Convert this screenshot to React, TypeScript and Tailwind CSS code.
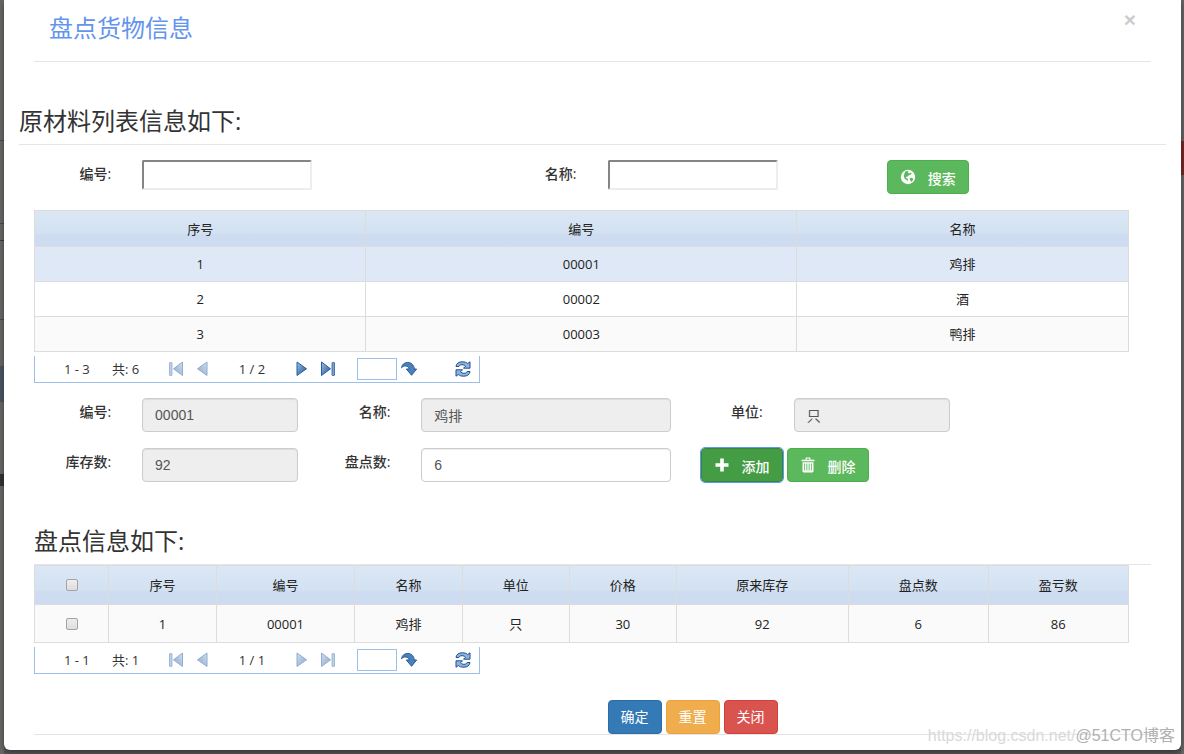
import { useState } from 'react';
import type { ReactNode } from 'react';

const MATERIALS = [
  { id: 1, code: '00001', name: '鸡排' },
  { id: 2, code: '00002', name: '酒' },
  { id: 3, code: '00003', name: '鸭排' }
];

const CHECK_HEADERS = ['序号', '编号', '名称', '单位', '价格', '原来库存', '盘点数', '盈亏数'];
const CHECK_ROWS = [['1', '00001', '鸡排', '只', '30', '92', '6', '86']];

const HEAD_BG = 'bg-linear-to-b from-[#dbe7f5] from-0% via-[#d3e1f1] via-62% to-[#cddcf0] to-66%';
const CELL = 'border border-[#dcdcdc] p-0 text-center font-normal';
const BUTTON = 'inline-flex h-[34px] items-center justify-center rounded border text-sm text-white';
const GREEN = 'w-[82px] gap-3 border-[#4cae4c] bg-[#5cb85c] pt-1 font-medium';

function GlobeIcon() {
  return (
    <svg viewBox="0 0 16 16" className="mb-1 size-4" aria-hidden="true">
      <circle cx="8" cy="8" r="7.2" fill="#fff" />
      <path
        d="M5.2 2.6 7.4 2l1.2.8-.6 1.1 1.3.5 1.6-.9.8 1.2-1.4 1.1-1.5.4-1 1.3-1.5.3-.4 1.2 1.3.3.8 1.3-.4 1.7-1-1.2-1.9-1.4-1-2.5.5-2z"
        fill="#5cb85c"
      />
      <path d="m9.6 9.2 1.9-.5 1.8.9-.6 1.7-1.6 1.7-.8-1.4z" fill="#5cb85c" />
    </svg>
  );
}

function PlusIcon() {
  return (
    <svg viewBox="0 0 16 16" className="mb-1 size-4" aria-hidden="true">
      <path d="M6.2 1.5h3.6v4.7h4.7v3.6H9.8v4.7H6.2V9.8H1.5V6.2h4.7z" fill="#fff" />
    </svg>
  );
}

function TrashIcon() {
  return (
    <svg viewBox="0 0 16 16" className="mb-1 size-4" aria-hidden="true">
      <path
        d="M1.5 4.3V2.8h4V1.6c0-.6.4-1 1-1h3c.6 0 1 .4 1 1v1.2h4v1.5zM6.6 2.8h2.8V1.6H6.6z"
        fill="#fff"
        fillRule="evenodd"
      />
      <path
        d="M2.5 5.2h11v9c0 .7-.5 1.2-1.2 1.2H3.7c-.7 0-1.2-.5-1.2-1.2zM4.2 6.6v7h.9v-7zm2.2 0v7h.9v-7zm2.3 0v7h.9v-7zm2.2 0v7h.9v-7z"
        fill="#fff"
        fillRule="evenodd"
      />
    </svg>
  );
}

function StepIcon({ back, bar }: { back?: boolean; bar?: boolean }) {
  return (
    <svg viewBox="0 0 16 16" className={back ? 'size-4 -scale-x-100' : 'size-4'} aria-hidden="true">
      <defs>
        <linearGradient id="step" x1="0" y1="0" x2="1" y2="1">
          <stop offset="0" stopColor="#9fc2e6" />
          <stop offset="1" stopColor="#1d4f91" />
        </linearGradient>
      </defs>
      <path
        d={bar ? 'M1.5 1v13.500L10.500 7.800z' : 'M3 1v13.500L12.500 7.800z'}
        fill="url(#step)"
        stroke="#2a5d9f"
        strokeLinejoin="round"
      />
      {bar && <rect x="12" y="1.5" width="2.5" height="13" rx="0.5" fill="#7aa3d3" stroke="#2a5d9f" strokeWidth="0.8" />}
    </svg>
  );
}

function GoIcon() {
  return (
    <svg viewBox="0 0 16 16" className="size-4" aria-hidden="true">
      <path
        d="M.5 6.8C1 3.400 3.600 1.300 6.800 1.400c3.700.1 6.300 2.700 6.500 6.600h2.300L10.600 14.300 5.300 8h2.900C8 6.200 6.500 5 4.600 5 3 5 1.500 5.600.5 6.800z"
        fill="#4a80bb"
        stroke="#1f5192"
        strokeWidth="0.9"
        strokeLinejoin="round"
      />
    </svg>
  );
}

function RefreshIcon() {
  return (
    <svg viewBox="0 0 16 16" className="size-4" aria-hidden="true">
      <g fill="#8fb4dc" stroke="#1f5192" strokeLinejoin="round">
        <path d="M1 5.500C1.200 2.400 3.800.8 7.200.8c2.400 0 4.200.5 5.500 1.700L15 .8v6.400H8.500l2-2C9.600 4.200 8.400 3.700 7 3.700c-1.700 0-2.700.6-3.100 1.800z" />
        <path d="M15 10.500c-.2 3.100-2.800 4.700-6.200 4.700-2.400 0-4.200-.5-5.500-1.700L1 15.200V8.800h6.500l-2 2c.9 1 2.100 1.500 3.500 1.500 1.700 0 2.700-.6 3.100-1.800z" />
      </g>
    </svg>
  );
}

type PagerProps = { range: string; total: number; page: string; hasNext: boolean };

function Pager({ range, total, page, hasNext }: PagerProps) {
  return (
    <div className="mt-1 flex h-[27px] w-fit items-center border-x border-b border-[#9cc0ea] pr-2 pl-[29px] text-[13px] leading-5">
      <span className="w-12">{range}</span>
      <span className="w-14">共: {total}</span>
      <button type="button" aria-label="首页" disabled className="opacity-50">
        <StepIcon back bar />
      </button>
      <button type="button" aria-label="上一页" disabled className="ml-2.5 opacity-50">
        <StepIcon back />
      </button>
      <span className="w-[84px] text-center">{page}</span>
      <button type="button" aria-label="下一页" disabled={!hasNext} className="disabled:opacity-50">
        <StepIcon />
      </button>
      <button type="button" aria-label="末页" disabled={!hasNext} className="ml-2.5 disabled:opacity-50">
        <StepIcon bar />
      </button>
      <input aria-label="页码" className="ml-[21px] h-[22px] w-10 border border-[#9cc0ea] px-1 outline-none" />
      <button type="button" aria-label="跳转" className="ml-1">
        <GoIcon />
      </button>
      <button type="button" aria-label="刷新" className="ml-[38px]">
        <RefreshIcon />
      </button>
    </div>
  );
}

function Label({ htmlFor, children }: { htmlFor: string; children: ReactNode }) {
  return (
    <label htmlFor={htmlFor} className="pt-1 pr-4 text-right text-sm leading-5 font-medium whitespace-nowrap">
      {children}
    </label>
  );
}

function Field({ id, value, onChange }: { id: string; value: string; onChange?: (value: string) => void }) {
  return (
    <input
      id={id}
      value={value}
      readOnly={!onChange}
      onChange={(event) => onChange?.(event.target.value)}
      className="h-[34px] w-full rounded border border-[#ccc] px-3 font-['Liberation_Sans','Noto_Sans_CJK_SC',sans-serif] text-sm text-[#555] shadow-[inset_0_1px_1px_rgba(0,0,0,0.075)] outline-none read-only:bg-[#eee]"
    />
  );
}

function SearchBox({ id }: { id: string }) {
  return (
    <input
      id={id}
      className="h-[30px] w-[170px] rounded-xs border-2 border-t-[#858585] border-r-[#ededed] border-b-[#ededed] border-l-[#858585] px-1 text-sm outline-none"
    />
  );
}

function CheckBox({ label }: { label: string }) {
  return (
    <input
      type="checkbox"
      aria-label={label}
      className="mx-auto block size-3 appearance-none rounded-xs border border-[#a3a3a3] bg-linear-to-b from-[#eee] to-[#ddd] checked:bg-[#337ab7] checked:bg-none"
    />
  );
}

function FormRow({ children }: { children: ReactNode }) {
  return <div className="mx-[30px] grid grid-cols-12 items-start">{children}</div>;
}

export default function App() {
  const [counted, setCounted] = useState('6');
  const [selected, setSelected] = useState(1);
  const current = MATERIALS.find((item) => item.id === selected) ?? MATERIALS[0];

  return (
    <div className="flex min-h-screen items-stretch bg-[#555] font-['Open_Sans','Noto_Sans_CJK_SC',sans-serif] text-[#333]">
      {/* dimmed page behind the dialog */}
      <div className="w-1 shrink-0 bg-[#6a6865]">
        <div className="mt-[140px] h-px bg-[#4a4a4a]" />
        <div className="mt-[82px] h-px bg-[#4a4a4a]" />
        <div className="mt-4 h-px bg-[#3c3c3c]" />
        <div className="mt-[78px] h-px bg-[#4a4a4a]" />
        <div className="mt-[46px] h-9 bg-[#4b5563]" />
        <div className="mt-[72px] h-3 bg-[#333]" />
      </div>

      <div
        role="dialog"
        aria-labelledby="dialog-title"
        className="relative mb-1 min-w-0 flex-1 self-start rounded-b-md bg-white pb-[15px] shadow-[0_2px_6px_rgba(0,0,0,0.4)]"
      >
        <header className="mx-[30px] flex h-[62px] items-start justify-between border-b border-[#e5e5e5] px-[15px]">
          <h1 id="dialog-title" className="pt-3 text-2xl leading-8 font-normal text-[#6495ed]">
            盘点货物信息
          </h1>
          <button
            type="button"
            aria-label="关闭窗口"
            className="mt-2 font-['Liberation_Sans',sans-serif] text-[21px] leading-6 font-bold text-[#ccc]"
          >
            ×
          </button>
        </header>

        <h2 className="mx-[15px] mt-9 border-b border-[#e5e5e5] text-2xl leading-[46px] font-normal">
          原材料列表信息如下:
        </h2>

        <form className="pt-[15px] pb-4" onSubmit={(event) => event.preventDefault()}>
          <FormRow>
            <Label htmlFor="search-code">编号:</Label>
            <div className="col-span-4 px-[15px]">
              <SearchBox id="search-code" />
            </div>
            <Label htmlFor="search-name">名称:</Label>
            <div className="col-span-3 px-[15px]">
              <SearchBox id="search-name" />
            </div>
            <div className="col-span-3 px-[15px]">
              <button type="submit" className={`${BUTTON} ${GREEN}`}>
                <GlobeIcon />
                搜索
              </button>
            </div>
          </FormRow>
        </form>

        <div className="mx-[30px]">
          <table className="w-[98%] table-fixed border-collapse text-[13px] leading-5 text-[#222]">
            <colgroup>
              <col className="w-[30.3%]" />
              <col className="w-[39.4%]" />
              <col className="w-[30.3%]" />
            </colgroup>
            <thead className={HEAD_BG}>
              <tr className="h-9">
                <th className={CELL}>序号</th>
                <th className={CELL}>编号</th>
                <th className={CELL}>名称</th>
              </tr>
            </thead>
            <tbody>
              {MATERIALS.map((item) => (
                <tr
                  key={item.id}
                  onClick={() => setSelected(item.id)}
                  className={item.id === selected ? 'h-[35px] bg-[#dfe8f6]' : 'h-[35px] odd:bg-[#fafafa]'}
                >
                  <td className={CELL}>{item.id}</td>
                  <td className={CELL}>{item.code}</td>
                  <td className={CELL}>{item.name}</td>
                </tr>
              ))}
            </tbody>
          </table>
          <Pager range="1 - 3" total={6} page="1 / 2" hasNext />
        </div>

        <form className="mt-[15px] space-y-4" onSubmit={(event) => event.preventDefault()}>
          <FormRow>
            <Label htmlFor="code">编号:</Label>
            <div className="col-span-2 px-[15px]">
              <Field id="code" value={current.code} />
            </div>
            <Label htmlFor="name">名称:</Label>
            <div className="col-span-3 px-[15px]">
              <Field id="name" value={current.name} />
            </div>
            <Label htmlFor="unit">单位:</Label>
            <div className="col-span-2 px-[15px]">
              <Field id="unit" value="只" />
            </div>
          </FormRow>
          <FormRow>
            <Label htmlFor="stock">库存数:</Label>
            <div className="col-span-2 px-[15px]">
              <Field id="stock" value="92" />
            </div>
            <Label htmlFor="counted">盘点数:</Label>
            <div className="col-span-3 px-[15px]">
              <Field id="counted" value={counted} onChange={setCounted} />
            </div>
            <div className="col-span-4 flex gap-1 px-[15px]">
              <button
                type="button"
                className={`${BUTTON} w-[82px] gap-3 border-[#398439] bg-[#449d44] pt-1 font-medium outline-1 outline-[#5b9cf0]`}
              >
                <PlusIcon />
                添加
              </button>
              <button type="button" className={`${BUTTON} ${GREEN}`}>
                <TrashIcon />
                删除
              </button>
            </div>
          </FormRow>
        </form>

        <div className="mx-[30px] mt-9">
          <h2 className="border-b border-[#e5e5e5] text-2xl leading-[46px] font-normal">盘点信息如下:</h2>
          <table className="w-[98%] table-fixed border-collapse text-[13px] leading-5 text-[#222]">
            <colgroup>
              <col className="w-[6.8%]" />
              <col className="w-[9.8%]" />
              <col className="w-[12.7%]" />
              <col className="w-[9.8%]" />
              <col className="w-[9.8%]" />
              <col className="w-[9.8%]" />
              <col className="w-[15.7%]" />
              <col className="w-[12.8%]" />
              <col className="w-[12.8%]" />
            </colgroup>
            <thead className={HEAD_BG}>
              <tr className="h-[39px]">
                <th className={CELL}>
                  <CheckBox label="全选" />
                </th>
                {CHECK_HEADERS.map((title) => (
                  <th key={title} className={CELL}>
                    {title}
                  </th>
                ))}
              </tr>
            </thead>
            <tbody>
              {CHECK_ROWS.map((row) => (
                <tr key={row[0]} className="h-[38px] bg-[#fafafa]">
                  <td className={CELL}>
                    <CheckBox label={`选择第${row[0]}行`} />
                  </td>
                  {row.map((value, index) => (
                    <td key={CHECK_HEADERS[index]} className={CELL}>
                      {value}
                    </td>
                  ))}
                </tr>
              ))}
            </tbody>
          </table>
          <Pager range="1 - 1" total={1} page="1 / 1" hasNext={false} />
        </div>

        <footer className="mx-[30px] mt-[26px] grid grid-cols-12 border-b border-[#e5e5e5]">
          <div className="col-span-6 col-start-7 flex gap-1 px-[15px]">
            <button type="submit" className={`${BUTTON} w-[54px] border-[#2e6da4] bg-[#337ab7]`}>
              确定
            </button>
            <button type="reset" className={`${BUTTON} w-[54px] border-[#eea236] bg-[#f0ad4e]`}>
              重置
            </button>
            <button type="button" className={`${BUTTON} w-[54px] border-[#d43f3a] bg-[#d9534f]`}>
              关闭
            </button>
          </div>
        </footer>

        <div className="pointer-events-none absolute right-1.5 bottom-0.5 flex items-center font-['Liberation_Sans','Noto_Sans_CJK_SC',sans-serif] text-base leading-6">
          <span className="text-[#d9d9d9]">https://blog.csdn.net/</span>
          <span className="text-[#b0b0b0]">@51CTO博客</span>
        </div>
      </div>

      <div className="w-[3px] shrink-0 bg-[#666]">
        <div className="mt-[141px] h-[34px] bg-[#7a2626]" />
      </div>
    </div>
  );
}
